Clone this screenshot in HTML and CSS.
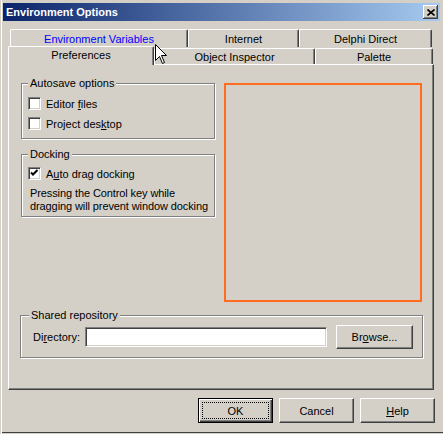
FILE: index.html
```html
<!DOCTYPE html>
<html>
<head>
<meta charset="utf-8">
<link rel="stylesheet" href="styles.css">
</head>
<body>
<div class="window">
  <div class="titlebar">
    <span class="title">Environment Options</span>
    <div class="close"><svg width="8" height="7" viewBox="0 0 8 7"><path d="M0.5 0.5 L7.5 6.5 M7.5 0.5 L0.5 6.5" stroke="#000" stroke-width="1.6" fill="none"/></svg></div>
  </div>
  <div class="tabs">
    <div class="tabrow back">
      <div class="tab hot w-env">Environment Variables</div>
      <div class="tab w-inet">Internet</div>
      <div class="tab w-delphi">Delphi Direct</div>
    </div>
    <div class="tabrow front">
      <div class="tab selected w-pref">Preferences</div>
      <div class="tab w-oi">Object Inspector</div>
      <div class="tab w-pal">Palette</div>
    </div>
  </div>
  <div class="page">
    <div class="toprow">
      <div class="leftcol">
        <fieldset class="group autosave">
          <legend>Autosave options</legend>
          <div class="groupbody">
            <div class="cbrow"><span class="cb"></span><span>Editor <u>f</u>iles</span></div>
            <div class="cbrow"><span class="cb"></span><span>Project des<u>k</u>top</span></div>
          </div>
        </fieldset>
        <fieldset class="group docking">
          <legend>Docking</legend>
          <div class="groupbody">
            <div class="cbrow"><span class="cb checked"><svg width="11" height="11" viewBox="0 0 11 11"><path d="M2 4.5 L4 6.5 L8.5 2" stroke="#000" stroke-width="2" fill="none"/></svg></span><span>A<u>u</u>to drag docking</span></div>
            <p class="note">Pressing the Control key while<br>dragging will prevent window docking</p>
          </div>
        </fieldset>
      </div>
      <div class="preview"></div>
    </div>
    <fieldset class="group shared">
      <legend>Shared repository</legend>
      <div class="groupbody dirrow">
        <span class="dirlabel">Di<u>r</u>ectory:</span>
        <span class="input"></span>
        <span class="btn browse">Br<u>o</u>wse...</span>
      </div>
    </fieldset>
  </div>
  <div class="buttons">
    <span class="btn default"><span class="focus">OK</span></span>
    <span class="btn">Cancel</span>
    <span class="btn"><u>H</u>elp</span>
  </div>
  <svg class="cursor" width="13" height="21" viewBox="0 0 13 21"><path d="M0.5 0.5 L0.5 16.5 L4.5 12.5 L7.5 19.5 L9.5 18.5 L6.5 11.5 L11.5 11.5 Z" fill="#fff" stroke="#000" stroke-width="1"/></svg>
</div>
</body>
</html>
```
FILE: styles.css
```css
* { box-sizing: border-box; }
html, body { margin: 0; padding: 0; }
body {
  background: #d4d0c8;
  font: 11px "Liberation Sans", Arial, sans-serif;
  color: #000;
}
.window {
  position: relative;
  width: 443px;
  height: 434px;
  background: #d4d0c8;
  overflow: hidden;
  box-shadow: inset 1px 0 0 #d4d0c8, inset 2px 0 0 #fff, inset 0 -1px 0 #d4d0c8, inset 0 -2px 0 #404040;
}
.titlebar {
  display: flex;
  align-items: center;
  justify-content: space-between;
  height: 18px;
  margin: 3px 3px 0 3px;
  padding: 0 2px 0 3px;
  background: linear-gradient(to right, #0a246a, #a6caf0);
  color: #fff;
  font-weight: bold;
}
.close {
  width: 15px;
  height: 14px;
  background: #d4d0c8;
  display: flex;
  align-items: center;
  justify-content: center;
  box-shadow: inset -1px -1px 0 #404040, inset 1px 1px 0 #fff, inset -2px -2px 0 #808080;
}
.tabs {
  height: 44px;
  padding-top: 8px;
}
.tabrow { display: flex; }
.tabrow.back { margin-left: 10px; height: 18px; }
.tabrow.front { margin-left: 8px; margin-top: -1px; height: 19px; align-items: flex-start; }
.tab {
  display: flex;
  align-items: center;
  justify-content: center;
  height: 18px;
  background: #d4d0c8;
  border-top: 1px solid #fff;
  border-left: 1px solid #fff;
  border-right: 1px solid #404040;
  border-radius: 2px 2px 0 0;
  box-shadow: inset -1px 0 0 #808080;
}
.tab.hot { color: #0000ff; }
.front .tab { margin-top: 2px; height: 16px; padding-top: 1px; }
.front .tab.selected {
  position: relative;
  z-index: 1;
  margin-top: 0;
  height: 19px;
  padding-top: 0;
  padding-bottom: 3px;
}
.w-env { width: 178px; }
.w-inet { width: 111px; }
.w-delphi { width: 133px; }
.w-pref { width: 146px; }
.w-oi { width: 161px; }
.w-pal { width: 118px; }

.page {
  margin-left: 8px;
  margin-top: -1px;
  width: 426px;
  height: 326px;
  border-top: 1px solid #fff;
  border-left: 1px solid #fff;
  border-right: 1px solid #404040;
  border-bottom: 1px solid #404040;
  box-shadow: inset -1px -1px 0 #808080;
  padding-left: 12px;
}
.toprow {
  display: flex;
  align-items: flex-start;
  gap: 9px;
}
.leftcol {
  width: 194px;
  margin-top: 12px;
  display: flex;
  flex-direction: column;
}
.preview {
  width: 198px;
  height: 219px;
  margin-top: 18px;
  border: 2px solid #ff6c21;
}
.group {
  margin: 0;
  padding: 0;
  min-width: 0;
  border: 1px solid #808080;
  box-shadow: 1px 1px 0 #fff, inset 1px 1px 0 #fff;
}
.group legend {
  padding: 0 2px;
  margin-left: 6px;
  line-height: 13px;
  background: #d4d0c8;
}
.autosave .groupbody {
  padding: 7px 0 8px 6px;
  display: flex;
  flex-direction: column;
  gap: 7px;
}
.docking { margin-top: 9px; }
.docking .groupbody { padding: 6px 0 3px 6px; }
.cbrow {
  display: flex;
  align-items: center;
  height: 13px;
  gap: 5px;
}
.cb {
  width: 13px;
  height: 13px;
  flex: none;
  background: #fff;
  border-top: 1px solid #808080;
  border-left: 1px solid #808080;
  border-right: 1px solid #fff;
  border-bottom: 1px solid #fff;
  box-shadow: inset 1px 1px 0 #404040, inset -1px -1px 0 #d4d0c8;
  display: flex;
}
.cb svg { display: block; }
.note {
  margin: 7px 0 0 2px;
  line-height: 13px;
  letter-spacing: -0.1px;
}
.shared {
  margin-top: 7px;
  margin-left: -1px;
  width: 403px;
}
.shared legend { margin-left: 8px; }
.dirrow {
  display: flex;
  align-items: center;
  padding: 3px 8px 8px 12px;
}
.dirlabel { width: 52px; }
.input {
  width: 242px;
  height: 20px;
  background: #fff;
  border-top: 1px solid #808080;
  border-left: 1px solid #808080;
  border-right: 1px solid #fff;
  border-bottom: 1px solid #fff;
  box-shadow: inset 1px 1px 0 #404040, inset -1px -1px 0 #d4d0c8;
}
.btn {
  display: flex;
  align-items: center;
  justify-content: center;
  background: #d4d0c8;
  border-top: 1px solid #fff;
  border-left: 1px solid #fff;
  border-right: 1px solid #404040;
  border-bottom: 1px solid #404040;
  box-shadow: inset -1px -1px 0 #808080;
}
.browse {
  width: 77px;
  height: 24px;
  margin-left: 9px;
}
.buttons {
  display: flex;
  justify-content: flex-end;
  gap: 6px;
  margin-top: 8px;
  padding-right: 8px;
}
.buttons .btn { width: 75px; height: 25px; }
.buttons .btn.default {
  border: 1px solid #000;
  box-shadow: inset 1px 1px 0 #fff, inset -1px -1px 0 #404040, inset -2px -2px 0 #808080;
  padding: 3px;
}
.focus {
  flex: 1;
  align-self: stretch;
  display: flex;
  align-items: center;
  justify-content: center;
  border: 1px dotted #000;
}
.cursor {
  position: absolute;
  left: 155px;
  top: 44px;
}
```
